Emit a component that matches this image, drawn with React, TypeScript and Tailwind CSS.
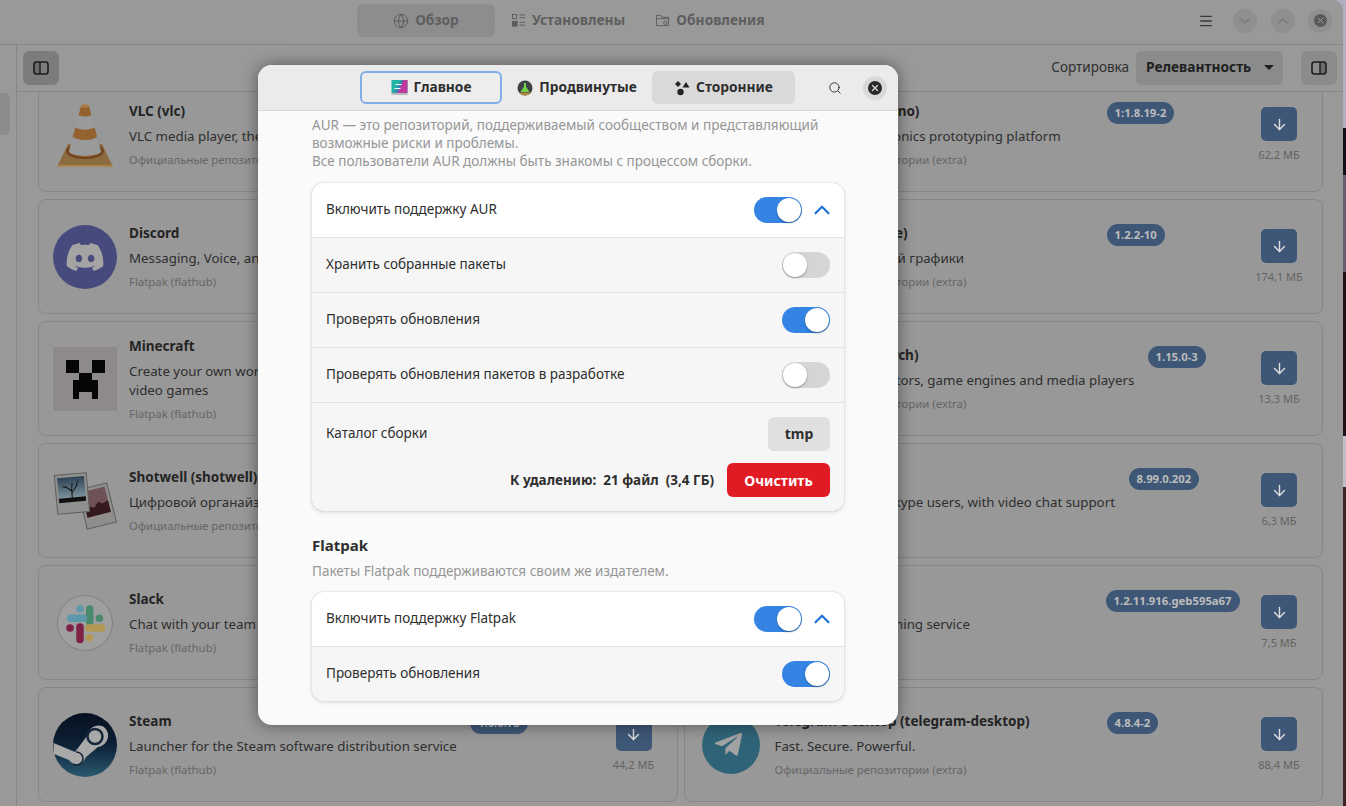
import React from 'react';
import { Globe, Search, ChevronUp, ChevronDown, ArrowDown, Menu, X } from 'lucide-react';
import { FaDiscord, FaTelegramPlane } from 'react-icons/fa';

const VlcIcon = () => (
  <svg viewBox="0 0 64 64" className="w-16 h-16">
    <polygon points="15,41 49,41 60,64 4,64" fill="#8c6c3f" />
    <polygon points="4,64 60,64 60,62 5,62" fill="#a8854f" />
    <ellipse cx="32" cy="48" rx="19" ry="8" fill="#70441f" />
    <polygon points="28,3 36,3 48,48 16,48" fill="#93622f" />
    <path d="M16 48a16 6 0 0 0 32 0z" fill="#93622f" />
    <path d="M24.5 11a7.5 2.5 0 0 0 15 0l3 12a10 3.5 0 0 1-21 0z" fill="#999a9b" />
    <path d="M20 33a12 4 0 0 0 24 0l4 15a16 5 0 0 1-32 0z" fill="#999a9b" />
    <ellipse cx="32" cy="3" rx="4" ry="1.8" fill="#a97a43" />
  </svg>
);

const MinecraftIcon = () => (
  <svg viewBox="0 0 64 64" className="w-16 h-16">
    <rect width="64" height="64" fill="#8f8a8a" />
    <path d="M13 13h13v13H13zM39 13h13v13H39zM26 26h13v7h6v19h-6v-7H26v7h-6V33h6z" fill="#060606" />
  </svg>
);

const ShotwellIcon = () => (
  <svg viewBox="0 0 64 64" className="w-16 h-16">
    <defs>
      <linearGradient id="shotSky" x1="0" y1="0" x2="0" y2="1">
        <stop offset="0" stopColor="#2c4356" />
        <stop offset="1" stopColor="#8fa2ab" />
      </linearGradient>
    </defs>
    <g transform="rotate(-14 44 37)">
      <rect x="29" y="17" width="30" height="40" fill="#8e8e8c" stroke="#5e5e5e" />
      <rect x="32" y="20" width="24" height="26" fill="#6e5257" />
      <path d="M32 46v-7l5-3 4 2 5-5 4 3 6-2v12z" fill="#34191e" />
    </g>
    <g transform="rotate(-5 19 25)">
      <rect x="3" y="5" width="32" height="39" fill="#90908e" stroke="#5e5e5e" />
      <rect x="5.5" y="8" width="27" height="25" fill="url(#shotSky)" />
      <rect x="5.5" y="28.5" width="27" height="4.5" fill="#111" />
      <path d="M19 30V20M19 22l-6-5M19 24l6-8M14 18l-4-1M24 17l2-5M19 21l1-7" stroke="#111" strokeWidth="1" fill="none" />
    </g>
  </svg>
);

const DiscordIcon = () => (
  <div className="w-16 h-16 rounded-full bg-[#464a7c] flex items-center justify-center">
    <FaDiscord className="w-[40px] h-[40px] text-[#a4a4a4]" />
  </div>
);

const SlackIcon = () => (
  <svg viewBox="0 0 64 64" className="w-16 h-16" strokeLinecap="round" strokeWidth="7.5" fill="none">
    <circle cx="32" cy="32" r="27.5" fill="#9f9f9f" stroke="#808080" strokeWidth="1" />
    <path d="M36.7 18v12.5" stroke="#4a8a6c" />
    <path d="M46.3 27.3h.1" stroke="#4a8a6c" />
    <path d="M17.7 27.3h12.6" stroke="#5e98ab" />
    <path d="M27 17.7h.1" stroke="#5e98ab" />
    <path d="M27 36v12.5" stroke="#7e2246" />
    <path d="M17 37h.1" stroke="#7e2246" />
    <path d="M36 37h12.5" stroke="#b29852" />
    <path d="M36.3 46.7h.1" stroke="#b29852" />
  </svg>
);

const SteamIcon = () => (
  <svg viewBox="0 0 64 64" className="w-16 h-16">
    <defs>
      <linearGradient id="steamFill" x1="0" y1="0" x2="0" y2="1">
        <stop offset="0" stopColor="#07101f" />
        <stop offset="0.5" stopColor="#0d2137" />
        <stop offset="1" stopColor="#2a5a70" />
      </linearGradient>
    </defs>
    <circle cx="32" cy="32" r="32" fill="url(#steamFill)" />
    <path d="M0.5 30L22 39L34 23C36 13 46 10 52 15C58 21 55 32 45 34L33 44C30 52 21 54 16 47L1 41Z" fill="#a9a9a9" />
    <circle cx="42" cy="23.5" r="7.5" fill="#a9a9a9" stroke="#14263a" strokeWidth="2.5" />
    <path d="M23 39a6.5 6.5 0 1 1-3 12" fill="none" stroke="#14263a" strokeWidth="1.5" />
  </svg>
);

const TelegramIcon = () => (
  <div className="w-16 h-16 flex items-center justify-center">
    <div className="w-[58px] h-[58px] rounded-full bg-[#2f6478] flex items-center justify-center pr-1">
      <FaTelegramPlane className="w-[31px] h-[31px] text-[#a2a2a2]" />
    </div>
  </div>
);

const GreyIcon = () => <div className="w-16 h-16 rounded-full bg-[#8a8a8a]" />;

const AlgoGlyph = () => (
  <svg viewBox="0 0 16 16" className="w-[17px] h-[16px]">
    <rect y="0" width="16" height="13" fill="#1fb3a4" />
    <polygon points="16,0 16,13 2,13 10,0" fill="#c0399c" />
    <polygon points="10,0 2,13 6,13 12,0" fill="#2f8fb0" />
    <rect y="13" width="16" height="2" fill="#b9b9b9" />
    <path d="M4 4.5h6M3 8.5h6" stroke="#fff" strokeWidth="1.1" />
  </svg>
);

const FlaskGlyph = () => (
  <svg viewBox="0 0 16 16" className="w-4 h-4">
    <circle cx="8" cy="8" r="7.5" fill="#3d4146" />
    <path d="M2 12.5a7.5 7.5 0 0 0 12 0z" fill="#b08a45" />
    <path d="M7 3h2v3.5L12.5 12h-9L7 6.5z" fill="#6fd04a" />
  </svg>
);

const ShapesGlyph = () => (
  <svg viewBox="0 0 16 16" className="w-4 h-4" fill="#222">
    <path d="M4 1l3 3-3 3-3-3z" />
    <path d="M12 2l3.5 5.5h-7z" />
    <circle cx="6.5" cy="12" r="3.2" />
  </svg>
);

const PanelIcon = ({ side }: { side: 'left' | 'right' }) => (
  <svg viewBox="0 0 16 16" className="w-4 h-4">
    <rect x={side === 'left' ? 1.5 : 9} y="2" width="5.5" height="12" fill="#6b6b6b" />
    <rect x="1" y="2" width="14" height="12" rx="2.5" fill="none" stroke="#1c1c1c" strokeWidth="1.6" />
    <path d={side === 'left' ? 'M7 2v12' : 'M9 2v12'} stroke="#1c1c1c" strokeWidth="1.4" />
  </svg>
);

const ListGlyph = () => (
  <svg viewBox="0 0 14 14" className="w-[13px] h-[13px]" fill="none" stroke="#5c5c5c">
    <rect x="0.5" y="0.5" width="4.5" height="4.5" />
    <rect x="0.5" y="8" width="5" height="5" fill="#5c5c5c" />
    <path d="M8 1h6M8 4h6M8 9h6M8 12h6" />
  </svg>
);

const FolderGlyph = () => (
  <svg viewBox="0 0 14 14" className="w-[13px] h-[13px]" fill="none" stroke="#5c5c5c">
    <path d="M.5 12.5V1.5h4.5l1.5 2h7v9z" />
    <path d="M.5 5h13" />
    <circle cx="10" cy="9.5" r="1.8" />
  </svg>
);

type AppCard = {
  name: string;
  desc: string[];
  source: string;
  version: string;
  size: string;
  icon: React.ReactNode;
  nameBox: string;
};

const EXTRA = 'Официальные репозитории (extra)';
const FLATHUB = 'Flatpak (flathub)';

const cards: AppCard[] = [
  { name: 'VLC (vlc)', desc: ['VLC media player, the open source multimedia player'], source: EXTRA, version: '3.0.18-8', size: '48,3 МБ', icon: <VlcIcon />, nameBox: 'w-[341px]' },
  { name: 'Arduino IDE (arduino)', desc: ['Open-source electronics prototyping platform'], source: EXTRA, version: '1:1.8.19-2', size: '62,2 МБ', icon: <GreyIcon />, nameBox: 'w-[332px]' },
  { name: 'Discord', desc: ['Messaging, Voice, and Video Client'], source: FLATHUB, version: '0.0.27', size: '86,9 МБ', icon: <DiscordIcon />, nameBox: 'w-[341px]' },
  { name: 'Inkscape (inkscape)', desc: ['Редактор векторной графики'], source: EXTRA, version: '1.2.2-10', size: '174,1 МБ', icon: <GreyIcon />, nameBox: 'w-[332px]' },
  { name: 'Minecraft', desc: ['Create your own worlds in one of the best-selling', 'video games'], source: FLATHUB, version: '1.20.1', size: '2,1 МБ', icon: <MinecraftIcon />, nameBox: 'w-[341px]' },
  { name: 'RetroArch (retroarch)', desc: ['Frontend for emulators, game engines and media players'], source: EXTRA, version: '1.15.0-3', size: '13,3 МБ', icon: <GreyIcon />, nameBox: 'w-[373px]' },
  { name: 'Shotwell (shotwell)', desc: ['Цифровой органайзер фотографий'], source: EXTRA, version: '0.30.17-1', size: '9,1 МБ', icon: <ShotwellIcon />, nameBox: 'w-[341px]' },
  { name: 'Skype', desc: ['Call and message skype users, with video chat support'], source: FLATHUB, version: '8.99.0.202', size: '6,3 МБ', icon: <GreyIcon />, nameBox: 'w-[354px]' },
  { name: 'Slack', desc: ['Chat with your team'], source: FLATHUB, version: '4.33.73', size: '5,2 МБ', icon: <SlackIcon />, nameBox: 'w-[341px]' },
  { name: 'Spotify', desc: ['Online music streaming service'], source: FLATHUB, version: '1.2.11.916.geb595a67', size: '7,5 МБ', icon: <GreyIcon />, nameBox: 'w-[331px]' },
  { name: 'Steam', desc: ['Launcher for the Steam software distribution service'], source: FLATHUB, version: '1.0.0.75', size: '44,2 МБ', icon: <SteamIcon />, nameBox: 'w-[341px]' },
  { name: 'Telegram Desktop (telegram-desktop)', desc: ['Fast. Secure. Powerful.'], source: EXTRA, version: '4.8.4-2', size: '88,4 МБ', icon: <TelegramIcon />, nameBox: 'w-[332px]' },
];

const PackageCard = ({ card }: { card: AppCard }) => (
  <div className="flex h-[115px] rounded-[8px] border border-[#878787] bg-[#989898] pl-[14px] pr-[13px]">
    <div className="self-center shrink-0">{card.icon}</div>
    <div className="ml-3 flex-1 min-w-0 flex flex-col justify-center">
      <div className="flex h-[22px]">
        <div className={`${card.nameBox} shrink-0 whitespace-nowrap text-[13.5px] leading-[20px] font-bold text-[#242424]`}>{card.name}</div>
        <div className="h-[22px] mt-[1px] px-[8px] rounded-full bg-[#3e5777] text-[#bcbcbc] text-[11.3px] font-bold leading-[22px] whitespace-nowrap">{card.version}</div>
      </div>
      <div className="mt-[4px] text-[13.3px] leading-[19px] text-[#2e2e2e] whitespace-nowrap">
        {card.desc.map((line) => <div key={line}>{line}</div>)}
      </div>
      <div className="mt-[6px] text-[11.4px] leading-[16px] text-[#666666] whitespace-nowrap">{card.source}</div>
    </div>
    <div className="w-[60px] shrink-0 flex flex-col items-center pt-[29px]">
      <div className="w-9 h-[34px] rounded-[5px] bg-[#3e5777] flex items-center justify-center">
        <ArrowDown className="w-[17px] h-[17px] text-[#dedede]" strokeWidth={2} />
      </div>
      <div className="mt-[7px] text-[11px] leading-[14px] text-[#636363] whitespace-nowrap">{card.size}</div>
    </div>
  </div>
);

const Toggle = ({ on }: { on: boolean }) => (
  <div className={`w-12 h-[26px] rounded-full flex items-center shrink-0 p-[1px] ${on ? 'bg-[#3584e4] justify-end' : 'bg-[#d5d5d5] justify-start'}`}>
    <div className="w-6 h-6 rounded-full bg-white shadow-[0_1px_2px_rgba(0,0,0,0.35)]" />
  </div>
);

const Row = ({ label, on, expander, first }: { label: string; on: boolean; expander?: boolean; first?: boolean }) => (
  <div className={`flex items-center pl-[14px] pr-[14px] ${first ? 'h-[54px] bg-white pb-[1px]' : 'h-[55px] bg-[#f6f6f6] border-t border-[#e3e3e3]'}`}>
    <span className="flex-1 text-[13.5px] leading-[18px] pb-[2px] text-[#2e2e2e]">{label}</span>
    <Toggle on={on} />
    {expander && <ChevronUp className="ml-[7px] mr-[-5px] w-[26px] h-[26px] text-[#1c71d8]" strokeWidth={2} />}
  </div>
);

const ModalTab = ({ icon, label, className }: { icon: React.ReactNode; label: string; className: string }) => (
  <div className={`h-[33px] rounded-[6px] flex items-center justify-center gap-[6px] text-[13.75px] font-bold text-[#2e2e2e] ${className}`}>
    {icon}
    <span>{label}</span>
  </div>
);

const App: React.FC = () => {
  return (
    <div className="relative h-screen w-full overflow-hidden pr-[3px] font-['Noto_Sans',sans-serif] bg-[linear-gradient(to_bottom,#b2aebd_0,#b2aebd_128px,#111018_128px,#111018_175px,#6a5a6e_175px,#6a5a6e_272px,#241018_272px,#241018_436px,#c0bcc8_436px,#c0bcc8_487px,#3d2328_487px)]">
      <div className="h-full flex flex-col bg-[#999999] rounded-tr-[10px] overflow-hidden">
        <header className="h-[45px] shrink-0 border-b border-[#878787] flex items-center pb-[3px] pl-[357px] pr-[11px]">
          <div className="w-[138px] h-[33px] rounded-[6px] bg-[#8d8d8d] flex items-center justify-center gap-[6px] text-[13.75px] font-bold text-[#5e5e5e]">
            <Globe className="w-4 h-4 text-[#5c5c5c]" strokeWidth={1.5} />
            <span>Обзор</span>
          </div>
          <div className="ml-[17px] flex items-center gap-[7px] text-[13.75px] font-bold text-[#5e5e5e]">
            <ListGlyph />
            <span>Установлены</span>
          </div>
          <div className="ml-[31px] flex items-center gap-[7px] text-[13.75px] font-bold text-[#5e5e5e]">
            <FolderGlyph />
            <span>Обновления</span>
          </div>
          <div className="ml-auto flex items-center">
            <Menu className="w-4 h-4 text-[#3a3a3a]" strokeWidth={2} />
            <div className="ml-[19px] w-6 h-6 rounded-full bg-[#8f8f8f] flex items-center justify-center">
              <ChevronDown className="w-4 h-4 text-[#5c5c5c]" strokeWidth={1.2} />
            </div>
            <div className="ml-[14px] w-6 h-6 rounded-full bg-[#8f8f8f] flex items-center justify-center">
              <ChevronUp className="w-4 h-4 text-[#5c5c5c]" strokeWidth={1.2} />
            </div>
            <div className="ml-[13px] w-6 h-6 rounded-full bg-[#8f8f8f] flex items-center justify-center">
              <div className="w-[13px] h-[13px] rounded-full bg-[#5a5a5a] flex items-center justify-center">
                <X className="w-[9px] h-[9px] text-[#a0a0a0]" strokeWidth={2.5} />
              </div>
            </div>
          </div>
        </header>
        <div className="flex-1 min-h-0 flex">
          <aside className="w-[17px] shrink-0 border-r border-[#878787] pt-[48px]">
            <div className="w-[10px] h-[42px] rounded-r-[6px] bg-[#8b8b8b]" />
          </aside>
          <main className="flex-1 min-w-0 flex flex-col">
            <div className="h-[47px] shrink-0 border-b border-[#878787] flex items-center pl-[6px] pr-[6px] pb-[1px]">
              <div className="w-9 h-[34px] rounded-[6px] bg-[#7c7c7c] flex items-center justify-center">
                <PanelIcon side="left" />
              </div>
              <span className="ml-auto text-[13.5px] text-[#2e2e2e]">Сортировка</span>
              <div className="ml-[7px] w-[147px] h-[34px] rounded-[6px] bg-[#8b8b8b] flex items-center pl-[10px] text-[13.75px] font-bold text-[#1f1f1f]">
                <span>Релевантность</span>
                <div className="ml-[13px] w-0 h-0 border-x-[5px] border-x-transparent border-t-[5px] border-t-[#1f1f1f]" />
              </div>
              <div className="ml-[18px] w-9 h-[34px] rounded-[6px] bg-[#8b8b8b] flex items-center justify-center">
                <PanelIcon side="right" />
              </div>
            </div>
            <div className="flex-1 min-h-0 overflow-hidden pl-[21px] pr-[20px]">
              <div className="mt-[-15px] grid grid-cols-2 gap-x-[6px] gap-y-[7px]">
                {cards.map((card) => <PackageCard key={card.name} card={card} />)}
              </div>
            </div>
          </main>
        </div>
      </div>

      <div className="absolute left-[258px] top-[65px] w-[640px] h-[660px] rounded-[14px] bg-[#fafafa] overflow-hidden shadow-[0_0_16px_rgba(0,0,0,0.45)] flex flex-col">
        <div className="h-[46px] shrink-0 bg-[#ebebeb] border-b border-[#d8d8d8] flex items-center pl-[102px]">
          <ModalTab icon={<AlgoGlyph />} label="Главное" className="w-[142px] border-2 border-[#82aee6] bg-[#ededed]" />
          <ModalTab icon={<FlaskGlyph />} label="Продвинутые" className="ml-[2px] w-[146px]" />
          <ModalTab icon={<ShapesGlyph />} label="Сторонние" className="ml-[2px] w-[143px] bg-[#d9d9d9]" />
          <Search className="ml-[33px] w-[14px] h-[14px] text-[#2e2e2e]" strokeWidth={1.6} />
          <div className="ml-[21px] w-6 h-6 rounded-full bg-[#d9d9d9] flex items-center justify-center">
            <div className="w-[14px] h-[14px] rounded-full bg-[#2a2a2a] flex items-center justify-center">
              <X className="w-[10px] h-[10px] text-[#d9d9d9]" strokeWidth={3} />
            </div>
          </div>
        </div>
        <div className="flex-1 min-h-0 overflow-hidden px-[54px] pt-[5px]">
          <div className="text-[13.5px] leading-[18px] text-[#969696]">
            <p>AUR — это репозиторий, поддерживаемый сообществом и представляющий</p>
            <p>возможные риски и проблемы.</p>
            <p>Все пользователи AUR должны быть знакомы с процессом сборки.</p>
          </div>
          <div className="mt-[13px] rounded-[12px] overflow-hidden shadow-[0_0_1px_rgba(0,0,0,0.3),0_1px_4px_rgba(0,0,0,0.15)]">
            <Row first label="Включить поддержку AUR" on expander />
            <Row label="Хранить собранные пакеты" on={false} />
            <Row label="Проверять обновления" on />
            <Row label="Проверять обновления пакетов в разработке" on={false} />
            <div className="bg-[#f6f6f6] border-t border-[#e3e3e3] px-[14px] pt-[14px] pb-[14px]">
              <div className="flex items-center justify-between">
                <span className="text-[13.5px] pb-[2px] text-[#2e2e2e]">Каталог сборки</span>
                <div className="w-[62px] h-[34px] rounded-[6px] bg-[#e0e0e0] flex items-center justify-center pb-[2px] text-[14px] font-bold text-[#2e2e2e]">tmp</div>
              </div>
              <div className="mt-[12px] flex items-center justify-end">
                <span className="text-[13.5px] font-bold text-[#2e2e2e] whitespace-pre">К удалению:  21 файл  (3,4 ГБ)</span>
                <div className="ml-[13px] w-[103px] h-[34px] rounded-[6px] bg-[#e01b24] flex items-center justify-center text-[14px] font-bold text-white">Очистить</div>
              </div>
            </div>
          </div>
          <h3 className="mt-[23px] text-[15px] leading-[22px] font-bold text-[#2e2e2e]">Flatpak</h3>
          <p className="mt-[6px] text-[13.5px] leading-[18px] text-[#969696]">Пакеты Flatpak поддерживаются своим же издателем.</p>
          <div className="mt-[12px] rounded-[12px] overflow-hidden shadow-[0_0_1px_rgba(0,0,0,0.3),0_1px_4px_rgba(0,0,0,0.15)]">
            <Row first label="Включить поддержку Flatpak" on expander />
            <Row label="Проверять обновления" on />
          </div>
        </div>
      </div>
    </div>
  );
};

export default App;
